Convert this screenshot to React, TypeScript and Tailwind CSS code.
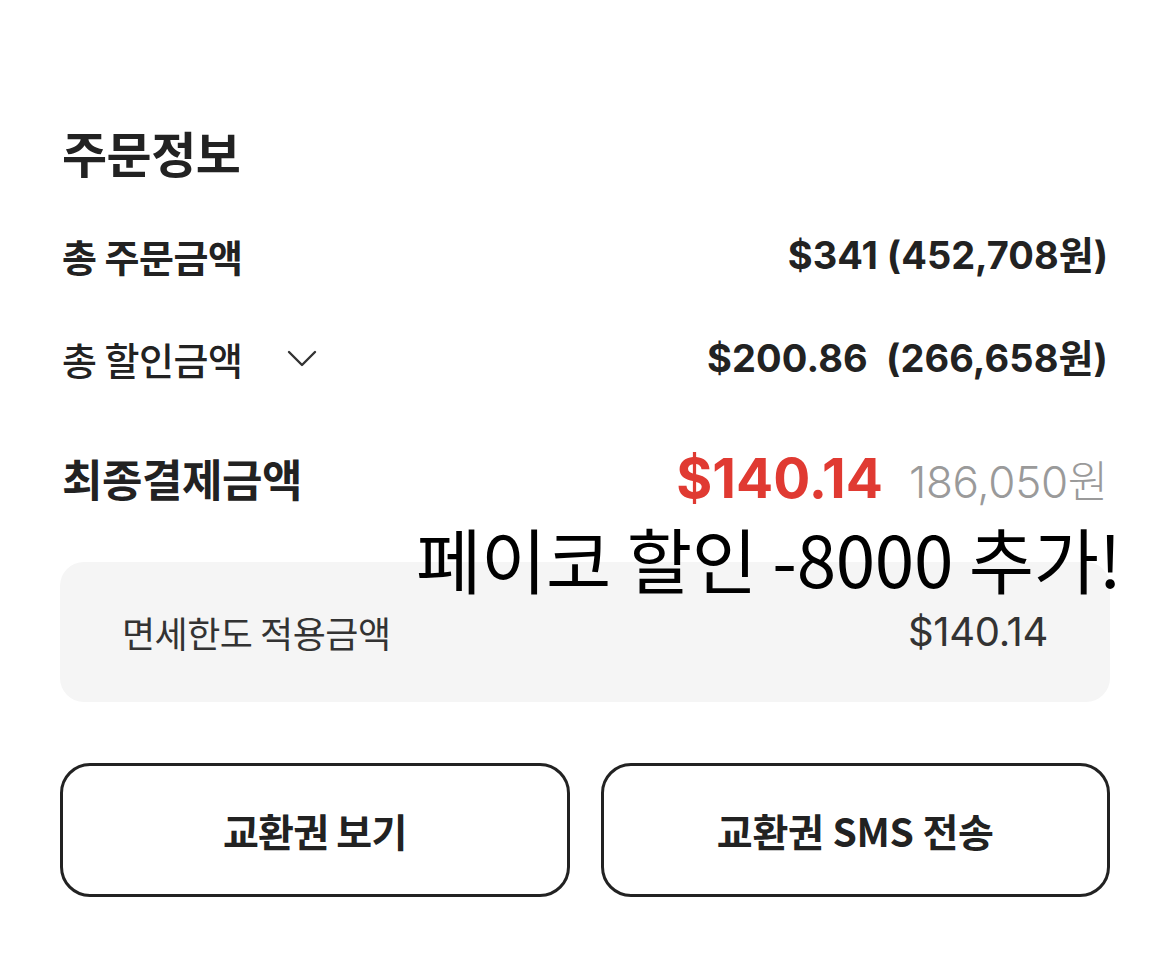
import React from "react";

const font = { fontFamily: '"Noto Sans CJK KR", "Noto Sans", sans-serif' };
const num = { fontFamily: 'Inter, "Noto Sans CJK KR", sans-serif' };

function Chevron() {
  return (
    <svg width="30" height="17" viewBox="0 0 30 17" fill="none" className="ml-[45px]">
      <polyline points="2,2 15,15 28,2" stroke="#333" strokeWidth="2.4" strokeLinecap="round" strokeLinejoin="round" />
    </svg>
  );
}

export default function App() {
  return (
    <div className="relative h-[957px] w-[1170px] overflow-hidden bg-white text-[#222]" style={font}>
      <div className="flex flex-col px-[60px] pt-[120px]">
        <h1 className="flex h-[62px] items-center pl-[2px] text-[49px] font-semibold leading-none tracking-[-0.5px]">
          주문정보
        </h1>

        <div className="mt-[22px] flex h-[103px] items-center justify-between pl-[2px]">
          <span className="text-[38px] font-bold tracking-[-0.5px]">총 주문금액</span>
          <span className="pr-[2px] text-[38px] font-bold" style={num}>$341 (452,708원)</span>
        </div>

        <div className="flex h-[103px] items-center justify-between pl-[2px]">
          <div className="flex items-center">
            <span className="text-[38px] font-medium tracking-[-0.5px]">총 할인금액</span>
            <Chevron />
          </div>
          <span className="pr-[2px] text-[38px] font-bold tracking-[0.1px]" style={num}>$200.86&nbsp; (266,658원)</span>
        </div>

        <div className="mt-[30px] flex h-[76px] items-center justify-between pl-[2px]">
          <span className="text-[44px] font-bold tracking-[-0.5px]">최종결제금액</span>
          <div className="flex items-baseline gap-[26px] pr-[2px]">
            <span className="text-[55px] font-bold text-[#e03a32]" style={num}>$140.14</span>
            <span className="text-[44px] font-light tracking-[-0.3px] text-[#9a9a9a]" style={num}>186,050원</span>
          </div>
        </div>

        <div className="mt-[46px] flex h-[140px] items-center justify-between rounded-[24px] bg-[#f5f5f5] px-[62px]">
          <span className="text-[36px] font-normal tracking-[-0.5px] text-[#333]">면세한도 적용금액</span>
          <span className="text-[40px] font-normal tracking-[-0.3px] text-[#333]" style={num}>$140.14</span>
        </div>

        <div className="mt-[61px] grid grid-cols-2 gap-[31px]">
          <button className="flex h-[134px] items-center justify-center rounded-[30px] border-[3px] border-[#222] bg-white text-[39px] font-bold tracking-[-0.8px] text-[#222]">
            교환권 보기
          </button>
          <button className="flex h-[134px] items-center justify-center rounded-[30px] border-[3px] border-[#222] bg-white text-[39px] font-bold tracking-[-0.2px] text-[#222]">
            교환권 SMS 전송
          </button>
        </div>
      </div>

      <div className="absolute left-[416px] top-[522px] text-[71px] font-normal leading-none tracking-[-0.3px] text-black">
        페이코 할인 -8000 추가!
      </div>
    </div>
  );
}
